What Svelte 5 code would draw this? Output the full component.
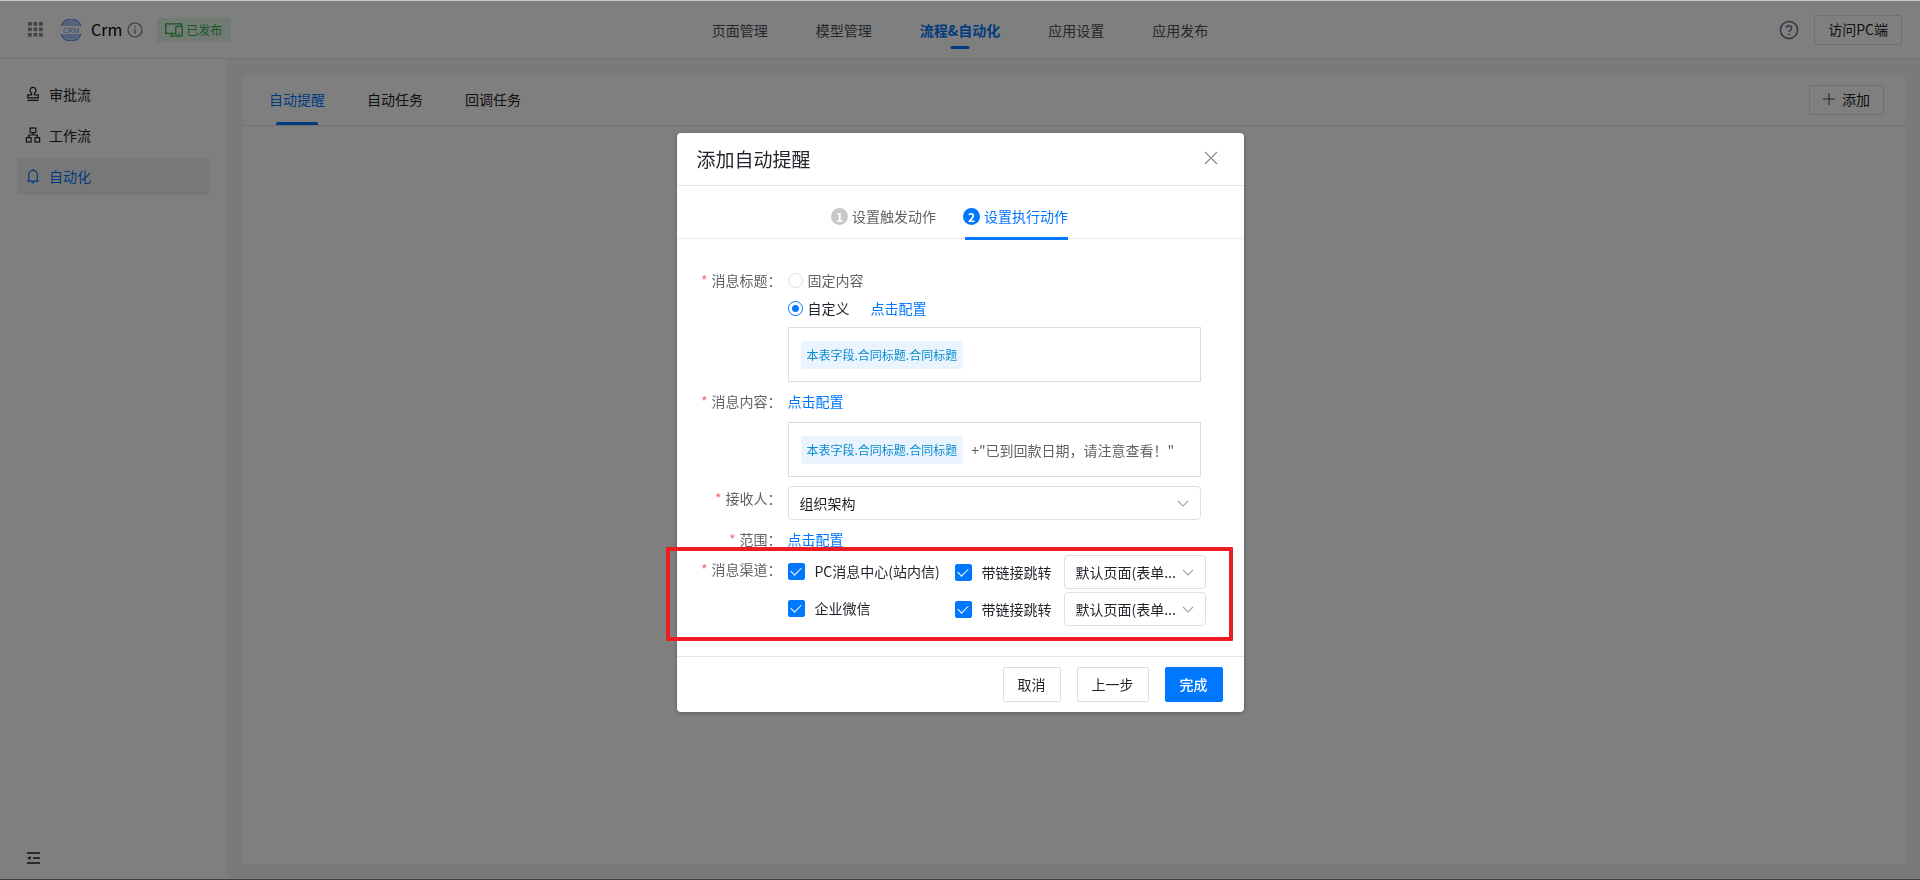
<script lang="ts">
  const navItems = ['页面管理', '模型管理', '流程&自动化', '应用设置', '应用发布'];
  const sideItems = [
    { icon: 'stamp', label: '审批流' },
    { icon: 'tree', label: '工作流' },
    { icon: 'bell', label: '自动化' },
  ];
  const tabs = ['自动提醒', '自动任务', '回调任务'];
  const steps = ['设置触发动作', '设置执行动作'];
  const fieldTag = '本表字段.合同标题.合同标题';

  let activeNav = $state(2);
  let activeSide = $state(2);
  let activeTab = $state(0);
  let activeStep = $state(1);
  let titleMode = $state('custom');
  let channels = $state([
    { id: 'pc', label: 'PC消息中心(站内信)', on: true, link: true },
    { id: 'wecom', label: '企业微信', on: true, link: true },
  ]);
</script>

{#snippet chevron()}
  <svg class="chevron" width="12" height="12" viewBox="0 0 12 12" aria-hidden="true">
    <path d="M1 4l5 5 5-5" fill="none" stroke="#a0a5b0" stroke-width="1.1" />
  </svg>
{/snippet}

<div class="app">
  <header class="topbar">
    <div class="brand">
      <svg class="grid-icon" width="15" height="15" viewBox="0 0 15 15" fill="#80868f" aria-hidden="true">
        {#each [0, 5.5, 11] as y}
          {#each [0, 5.5, 11] as x}
            <rect {x} {y} width="3.8" height="3.6" />
          {/each}
        {/each}
      </svg>
      <svg class="logo" width="22" height="22" viewBox="0 0 22 22" aria-hidden="true">
        <path d="M2 7a10 10 0 0 1 18 0z" fill="#a9c4f7" />
        <path d="M2 15a10 10 0 0 0 18 0z" fill="#a9c4f7" />
        <path d="M1.2 7a10.4 10.4 0 0 1 19.6 0M1.2 15a10.4 10.4 0 0 0 19.6 0" fill="none" stroke="#5b8def" stroke-width="1.2" />
        <text x="11" y="13.5" text-anchor="middle" font-family="Liberation Sans" font-size="7" fill="#5b8def">CRM</text>
      </svg>
      <span class="app-name">Crm</span>
      <svg class="info" width="16" height="16" viewBox="0 0 16 16" fill="none" stroke="#70757e" aria-hidden="true">
        <circle cx="8" cy="8" r="7" stroke-width="1.2" />
        <path d="M8 6.8v5M8 4v1.4" stroke-width="1.2" />
      </svg>
      <span class="badge">
        <svg width="18" height="14" viewBox="0 0 18 14" fill="none" stroke="#27ae4b" stroke-width="1.3" aria-hidden="true">
          <path d="M9.5 10.4H.8V.8h15.6V3M5 13.2h4.5M7 10.4v2.8" />
          <rect x="10.8" y="3.4" width="6.4" height="9.8" rx=".6" />
          <path d="M13 11.3h2" />
        </svg>
        已发布
      </span>
    </div>

    <nav class="nav">
      {#each navItems as item, i}
        <a href="#nav-{i}" class:active={i === activeNav} onclick={() => (activeNav = i)}>{item}</a>
      {/each}
    </nav>

    <div class="top-actions">
      <svg width="20" height="20" viewBox="0 0 20 20" fill="none" stroke="#5f6f80" stroke-width="1.5" aria-hidden="true">
        <circle cx="10" cy="10" r="8.6" />
        <path d="M7.4 8a2.6 2.6 0 1 1 3.9 2.3c-.9.5-1.3.9-1.3 1.8" />
        <path d="M10 13.4v1.6" />
      </svg>
      <button class="btn">访问PC端</button>
    </div>
  </header>

  <div class="main">
    <aside class="sidebar">
      {#each sideItems as item, i}
        <a href="#side-{i}" class="side-item" class:active={i === activeSide} onclick={() => (activeSide = i)}>
          <svg width="16" height="16" viewBox="0 0 16 16" fill="none" stroke="currentColor" stroke-width="1.2" aria-hidden="true">
            {#if item.icon === 'stamp'}
              <path d="M6.6 8.8V7a3 3 0 1 1 2.8 0v1.8h3.9v3H2.7v-3zM2.4 14.3h11.2" />
            {:else if item.icon === 'tree'}
              <rect x="5.2" y="1" width="5.6" height="4.6" />
              <rect x="1.4" y="10.6" width="4.6" height="4.4" />
              <rect x="10" y="10.6" width="4.6" height="4.4" />
              <path d="M8 5.6V8M3.7 10.6V8h8.6v2.6" />
            {:else}
              <path d="M2.2 13.1h11.6M3.7 13.1V6.7a4.3 4.3 0 0 1 8.6 0v6.4M8 2.4V1M6.8 14.6h2.4" />
            {/if}
          </svg>
          {item.label}
        </a>
      {/each}
      <button class="collapse" aria-label="收起菜单">
        <svg width="14" height="12" viewBox="0 0 14 12" aria-hidden="true">
          <path d="M0 1h13M6 6h7M0 11h13" stroke="#222" stroke-width="1.3" />
          <path d="M0 6l3.6-2v4z" fill="#222" />
        </svg>
      </button>
    </aside>

    <section class="content">
      <div class="panel">
        <div class="panel-head">
          <div class="tabs">
            {#each tabs as tab, i}
              <button class="tab" class:active={i === activeTab} onclick={() => (activeTab = i)}>{tab}</button>
            {/each}
          </div>
          <button class="btn add">
            <svg width="12" height="12" viewBox="0 0 12 12" aria-hidden="true">
              <path d="M6 0v12M0 6h12" stroke="#444" />
            </svg>
            添加
          </button>
        </div>
      </div>
    </section>
  </div>
</div>

<div class="mask">
  <div class="modal" role="dialog" aria-modal="true" aria-labelledby="modal-title">
    <div class="modal-head">
      <h2 id="modal-title">添加自动提醒</h2>
      <button class="close" aria-label="关闭">
        <svg width="14" height="14" viewBox="0 0 14 14" aria-hidden="true">
          <path d="M1 1l12 12M13 1L1 13" stroke="#8a8d93" stroke-width="1.2" />
        </svg>
      </button>
    </div>

    <div class="steps">
      {#each steps as step, i}
        <button class="step" class:active={i === activeStep} onclick={() => (activeStep = i)}>
          <span class="num">{i + 1}</span>{step}
        </button>
      {/each}
    </div>

    <form class="form">
      <div class="row">
        <span class="label">消息标题：</span>
        <div class="field">
          <div class="line">
            <label class="radio">
              <input type="radio" name="title-mode" value="fixed" bind:group={titleMode} />固定内容
            </label>
          </div>
          <div class="line">
            <label class="radio">
              <input type="radio" name="title-mode" value="custom" bind:group={titleMode} />自定义
            </label>
            <a href="#title-config">点击配置</a>
          </div>
          <div class="expr first"><span class="tag">{fieldTag}</span></div>
        </div>
      </div>

      <div class="row">
        <span class="label">消息内容：</span>
        <div class="field">
          <div class="line"><a href="#content-config">点击配置</a></div>
          <div class="expr"><span class="tag">{fieldTag}</span>+"已到回款日期，请注意查看！"</div>
        </div>
      </div>

      <div class="row receiver">
        <label class="label" for="receiver">接收人：</label>
        <div class="field">
          <div class="select">
            <select id="receiver"><option>组织架构</option></select>
            {@render chevron()}
          </div>
        </div>
      </div>

      <div class="row">
        <span class="label">范围：</span>
        <div class="field">
          <div class="line"><a href="#scope-config">点击配置</a></div>
        </div>
      </div>

      <div class="row channels">
        <span class="label">消息渠道：</span>
        <div class="field">
          {#each channels as channel (channel.id)}
            <div class="channel">
              <label class="check name"><input type="checkbox" bind:checked={channel.on} />{channel.label}</label>
              <label class="check"><input type="checkbox" bind:checked={channel.link} />带链接跳转</label>
              <div class="select small">
                <select aria-label="{channel.label}跳转页面"><option>默认页面(表单...</option></select>
                {@render chevron()}
              </div>
            </div>
          {/each}
        </div>
        <div class="highlight"></div>
      </div>
    </form>

    <div class="modal-foot">
      <button class="btn">取消</button>
      <button class="btn">上一步</button>
      <button class="btn primary">完成</button>
    </div>
  </div>
</div>

<style>
  :global(body) {
    margin: 0;
    font-family: 'Noto Sans CJK SC', 'Noto Sans', sans-serif;
    font-size: 14px;
    color: #1f2329;
  }

  * {
    box-sizing: border-box;
  }

  button,
  input,
  select {
    font: inherit;
    color: inherit;
    margin: 0;
  }

  button {
    background: none;
    border: none;
    padding: 0;
    cursor: pointer;
  }

  a {
    color: #0077ff;
    text-decoration: none;
  }

  svg {
    display: block;
    flex-shrink: 0;
  }

  .app {
    display: flex;
    flex-direction: column;
    min-height: 100vh;
    border-top: 1px solid #c8c8c8;
    border-bottom: 1px solid #433f4a;
    background: #fff;
  }

  .topbar {
    display: grid;
    grid-template-columns: 1fr auto 1fr;
    align-items: center;
    height: 58px;
    padding: 0 18px;
    border-bottom: 1px solid #e2e2e2;
  }

  .brand {
    display: flex;
    align-items: center;
    padding-left: 10px;
  }

  .logo {
    margin: 0 9px 0 17px;
  }

  .app-name {
    font-size: 16px;
    line-height: 22px;
    padding-bottom: 2px;
    color: #000;
  }

  .info {
    margin: 0 14px 0 5px;
  }

  .badge {
    display: flex;
    align-items: center;
    gap: 3px;
    height: 24px;
    padding: 0 9px 0 8px;
    background: #e3f7e8;
    color: #27ae4b;
    font-size: 12px;
  }

  .nav {
    display: flex;
    gap: 48px;
  }

  .nav a {
    position: relative;
    line-height: 36px;
    color: #4a4f57;
  }

  .nav a.active {
    color: #0077ff;
    font-weight: 700;
  }

  .nav a.active::after {
    content: '';
    position: absolute;
    left: 50%;
    bottom: -1px;
    width: 19px;
    height: 3px;
    border-radius: 2px;
    background: #0077ff;
    transform: translateX(-50%);
  }

  .top-actions {
    display: flex;
    align-items: center;
    justify-content: flex-end;
    gap: 15px;
  }

  .btn {
    height: 30px;
    padding: 0 13px 2px;
    border: 1px solid #dcdee2;
    border-radius: 2px;
    background: #fff;
  }

  .main {
    display: flex;
    flex: 1;
  }

  .sidebar {
    display: flex;
    flex-direction: column;
    gap: 4px;
    width: 227px;
    padding: 17px 17px 15px;
  }

  .side-item {
    display: flex;
    align-items: center;
    gap: 8px;
    height: 37px;
    padding: 0 8px 2px;
    border-radius: 3px;
    color: #222;
  }

  .side-item.active {
    background: #f0f0f0;
    color: #0077ff;
  }

  .collapse {
    align-self: flex-start;
    margin-top: auto;
    padding: 0 10px;
  }

  .content {
    display: flex;
    flex: 1;
    padding: 16px 15px 15px 16px;
    background: #f4f4f4;
  }

  .panel {
    flex: 1;
    background: #fff;
  }

  .panel-head {
    display: flex;
    justify-content: space-between;
    align-items: center;
    height: 51px;
    padding: 0 21px 0 26px;
    border-bottom: 1px solid #e2e2e2;
  }

  .tabs {
    display: flex;
    align-self: stretch;
    gap: 42px;
  }

  .tab {
    position: relative;
    padding-bottom: 2px;
  }

  .tab.active {
    color: #0077ff;
  }

  .tab.active::after {
    content: '';
    position: absolute;
    left: 7px;
    right: 7px;
    bottom: 0;
    height: 3px;
    border-radius: 2px 2px 0 0;
    background: #0077ff;
  }

  .add {
    display: flex;
    align-items: center;
    gap: 7px;
  }

  .mask {
    position: fixed;
    inset: 1px 0;
    display: flex;
    justify-content: center;
    align-items: flex-start;
    padding-top: 132px;
    background: rgba(0, 0, 0, 0.5);
  }

  .modal {
    width: 567px;
    border-radius: 4px;
    background: #fff;
    box-shadow: 0 1px 4px rgba(0, 0, 0, 0.3);
  }

  .modal-head {
    display: flex;
    justify-content: space-between;
    align-items: center;
    height: 53px;
    padding: 0 26px 2px 20px;
    border-bottom: 1px solid #e6e6e6;
  }

  h2 {
    margin: 0;
    font-size: 19px;
    font-weight: 400;
  }

  .steps {
    display: flex;
    justify-content: center;
    gap: 27px;
    height: 53px;
    padding-right: 21px;
    border-bottom: 1px solid #ebebeb;
  }

  .step {
    position: relative;
    display: flex;
    align-items: center;
    gap: 4px;
    padding-top: 8px;
    color: #606266;
  }

  .num {
    width: 17px;
    height: 17px;
    border-radius: 50%;
    background: #c8c8c8;
    color: #fff;
    font-size: 12px;
    font-weight: 700;
    line-height: 17px;
    text-align: center;
  }

  .step.active {
    color: #0077ff;
  }

  .step.active .num {
    background: #0077ff;
  }

  .step.active::after {
    content: '';
    position: absolute;
    left: 2px;
    right: 0;
    bottom: -2px;
    height: 3px;
    background: #0077ff;
  }

  .form {
    display: flex;
    flex-direction: column;
    gap: 5px;
    padding: 27px 38px 30px 0;
  }

  .row {
    display: flex;
    gap: 6px;
  }

  .label {
    width: 105px;
    line-height: 28px;
    text-align: right;
    color: #606266;
  }

  .label::before {
    content: '*';
    margin-right: 4px;
    color: #f56c6c;
  }

  .field {
    flex: 1;
  }

  .line {
    display: flex;
    gap: 21px;
    line-height: 28px;
  }

  .radio {
    display: flex;
    align-items: center;
    gap: 5px;
    color: #606266;
  }

  .radio:has(:checked) {
    color: #1f2329;
  }

  .radio input {
    appearance: none;
    width: 15px;
    height: 15px;
    border: 1px solid #dcdfe6;
    border-radius: 50%;
  }

  .radio input:checked {
    border-color: #0077ff;
    background: radial-gradient(circle, #0077ff 3px, #fff 4px);
  }

  .expr {
    display: flex;
    align-items: center;
    gap: 8px;
    height: 55px;
    margin: 7px 5px 0 0;
    padding: 0 12px;
    border: 1px solid #dcdcdc;
    color: #606266;
    white-space: nowrap;
  }

  .expr.first {
    margin-top: 5px;
  }

  .tag {
    padding: 0 6px;
    border-radius: 2px;
    background: #e9f4ff;
    color: #0a8bd0;
    font-size: 12px;
    line-height: 28px;
  }

  .receiver {
    margin-top: 4px;
  }

  .receiver .label {
    line-height: 24px;
  }

  .select {
    display: flex;
    align-items: center;
    height: 34px;
    margin-right: 5px;
    padding-right: 11px;
    border: 1px solid #dcdfe6;
    border-radius: 4px;
  }

  select {
    appearance: none;
    flex: 1;
    min-width: 0;
    height: 100%;
    padding: 0 0 0 11px;
    border: none;
    background: none;
  }

  .channels {
    position: relative;
    margin-top: -3px;
  }

  .channels .field {
    display: flex;
    flex-direction: column;
    gap: 3px;
  }

  .channel {
    display: flex;
    align-items: center;
  }

  .check {
    display: flex;
    align-items: center;
    gap: 10px;
    white-space: nowrap;
  }

  .check.name {
    width: 167px;
    padding-bottom: 2px;
  }

  .check input {
    appearance: none;
    display: grid;
    place-items: center;
    width: 17px;
    height: 17px;
    border: 1px solid #dcdfe6;
    border-radius: 2px;
  }

  .check input:checked {
    border-color: #0077ff;
    background: #0077ff;
  }

  .check input:checked::after {
    content: '';
    width: 5px;
    height: 9px;
    margin-bottom: 3px;
    border: solid #fff;
    border-width: 0 1px 1px 0;
    transform: rotate(45deg);
  }

  .small {
    width: 142px;
    margin: 0 0 0 auto;
  }

  .highlight {
    position: absolute;
    inset: -8px -27px -15px -11px;
    border: 4px solid #ed1c24;
    border-radius: 1px;
    pointer-events: none;
  }

  .modal-foot {
    display: flex;
    justify-content: flex-end;
    gap: 16px;
    padding: 10px 21px 10px 0;
    border-top: 1px solid #e6e6e6;
  }

  .modal-foot .btn {
    height: 35px;
    padding: 0 14px 2px;
  }

  .modal-foot .primary {
    border-color: #0077ff;
    background: #0077ff;
    color: #fff;
    font-weight: 500;
  }
</style>
